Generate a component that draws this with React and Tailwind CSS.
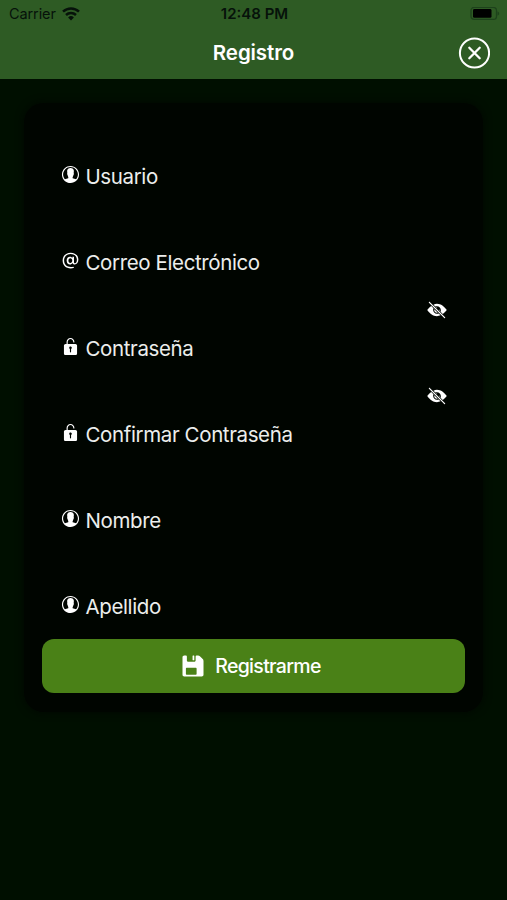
import React, { useState } from "react";
import { IoIosContact, IoIosAt, IoIosUnlock, IoIosEyeOff, IoIosSave } from "react-icons/io";

const fields = [
  { name: "usuario", label: "Usuario", icon: IoIosContact },
  { name: "correo", label: "Correo Electrónico", icon: IoIosAt },
  { name: "password", label: "Contraseña", icon: IoIosUnlock, secret: true },
  { name: "confirmar", label: "Confirmar Contraseña", icon: IoIosUnlock, secret: true },
  { name: "nombre", label: "Nombre", icon: IoIosContact },
  { name: "apellido", label: "Apellido", icon: IoIosContact },
];

const StatusBar = () => (
  <div className="grid h-[27px] grid-cols-[1fr_auto_1fr] items-center pl-[9px] pr-[7px] pt-px text-[#06120a]">
    <div className="flex items-center gap-[6px] text-[14.5px] tracking-[-0.1px]">
      <span>Carrier</span>
      <svg className="h-[14px] w-[18px]" viewBox="0 0 18 14" fill="none" stroke="currentColor" strokeWidth="2.5">
        <path d="M1 4.7a11.6 11.6 0 0 1 16 0" />
        <path d="M4 8a7.3 7.3 0 0 1 10 0" />
        <path d="M9 13.6 6.1 10.5a4.2 4.2 0 0 1 5.8 0z" fill="currentColor" stroke="none" />
      </svg>
    </div>
    <span className="text-center text-[15px] font-semibold">12:48 PM</span>
    <svg className="h-[14px] w-[30px] justify-self-end" viewBox="0 0 30 14">
      <rect x="1" y="0.4" width="25.5" height="12" rx="3.2" fill="none" stroke="#1d421b" strokeWidth="1.3" />
      <rect x="3" y="2.1" width="18.5" height="8.7" rx="1.4" fill="#000" />
      <path d="M27.5 4.5v4.2c1-.4 1.7-1.1 1.7-2.1s-.7-1.7-1.7-2.1z" fill="#1d421b" />
    </svg>
  </div>
);

const Header = () => (
  <header className="h-[79px] bg-[#2e5b24]">
    <StatusBar />
    <div className="grid h-[52px] grid-cols-[1fr_auto_1fr] items-center px-[17px]">
      <h1 className="col-start-2 text-[20.5px] font-semibold tracking-[-0.1px] text-white">Registro</h1>
      <button className="justify-self-end text-white" aria-label="Cerrar">
        <svg className="size-8" viewBox="0 0 32 32" fill="none" stroke="currentColor" strokeWidth="2">
          <circle cx="16.5" cy="16" r="14.6" />
          <path d="m11.3 10.8 10.4 10.4m0-10.4L11.3 21.2" strokeWidth="2.3" strokeLinecap="round" />
        </svg>
      </button>
    </div>
  </header>
);

const Field = ({ field, hidden, onToggle }) => {
  const Icon = field.icon;
  return (
    <div className="flex h-[86px] flex-col justify-end px-[35px]">
      {field.secret && (
        <button
          onClick={onToggle}
          type="button"
          className="mb-[14px] self-end text-white"
          aria-label="Mostrar"
          aria-pressed={!hidden}
        >
          <IoIosEyeOff className="size-[22px]" />
        </button>
      )}
      <label className="flex h-7 items-center gap-[5px] pl-[0.5px] text-[20.5px] tracking-[-0.38px] text-[#eceeec]">
        <Icon className="mb-[6px] size-[21px] shrink-0 text-white" />
        <span className="pt-px">{field.label}</span>
      </label>
    </div>
  );
};

const App = () => {
  const [hidden, setHidden] = useState({ password: true, confirmar: true });

  const toggle = (name) => setHidden({ ...hidden, [name]: !hidden[name] });

  return (
    <div className="flex h-[900px] w-full flex-col overflow-hidden bg-[#000f00] font-['Inter','Liberation_Sans',sans-serif]">
      <Header />
      <main className="px-6 pt-6">
        <form className="rounded-[20px] bg-[#000500] pb-[19px] pt-[2px] shadow-[0_0_8px_rgba(0,5,0,0.9)]">
          {fields.map((field) => (
            <Field
              key={field.name}
              field={field}
              hidden={hidden[field.name]}
              onToggle={() => toggle(field.name)}
            />
          ))}
          <button
            type="button"
            className="ml-[18px] mt-[18px] flex h-[54px] w-[423px] items-center justify-center gap-2 rounded-xl bg-[#4a8117] pr-[7px] text-[19.5px] font-medium tracking-[-0.7px] text-white"
          >
            <IoIosSave className="size-7" />
            <span className="pt-[2px]">Registrarme</span>
          </button>
        </form>
      </main>
    </div>
  );
};

export default App;
